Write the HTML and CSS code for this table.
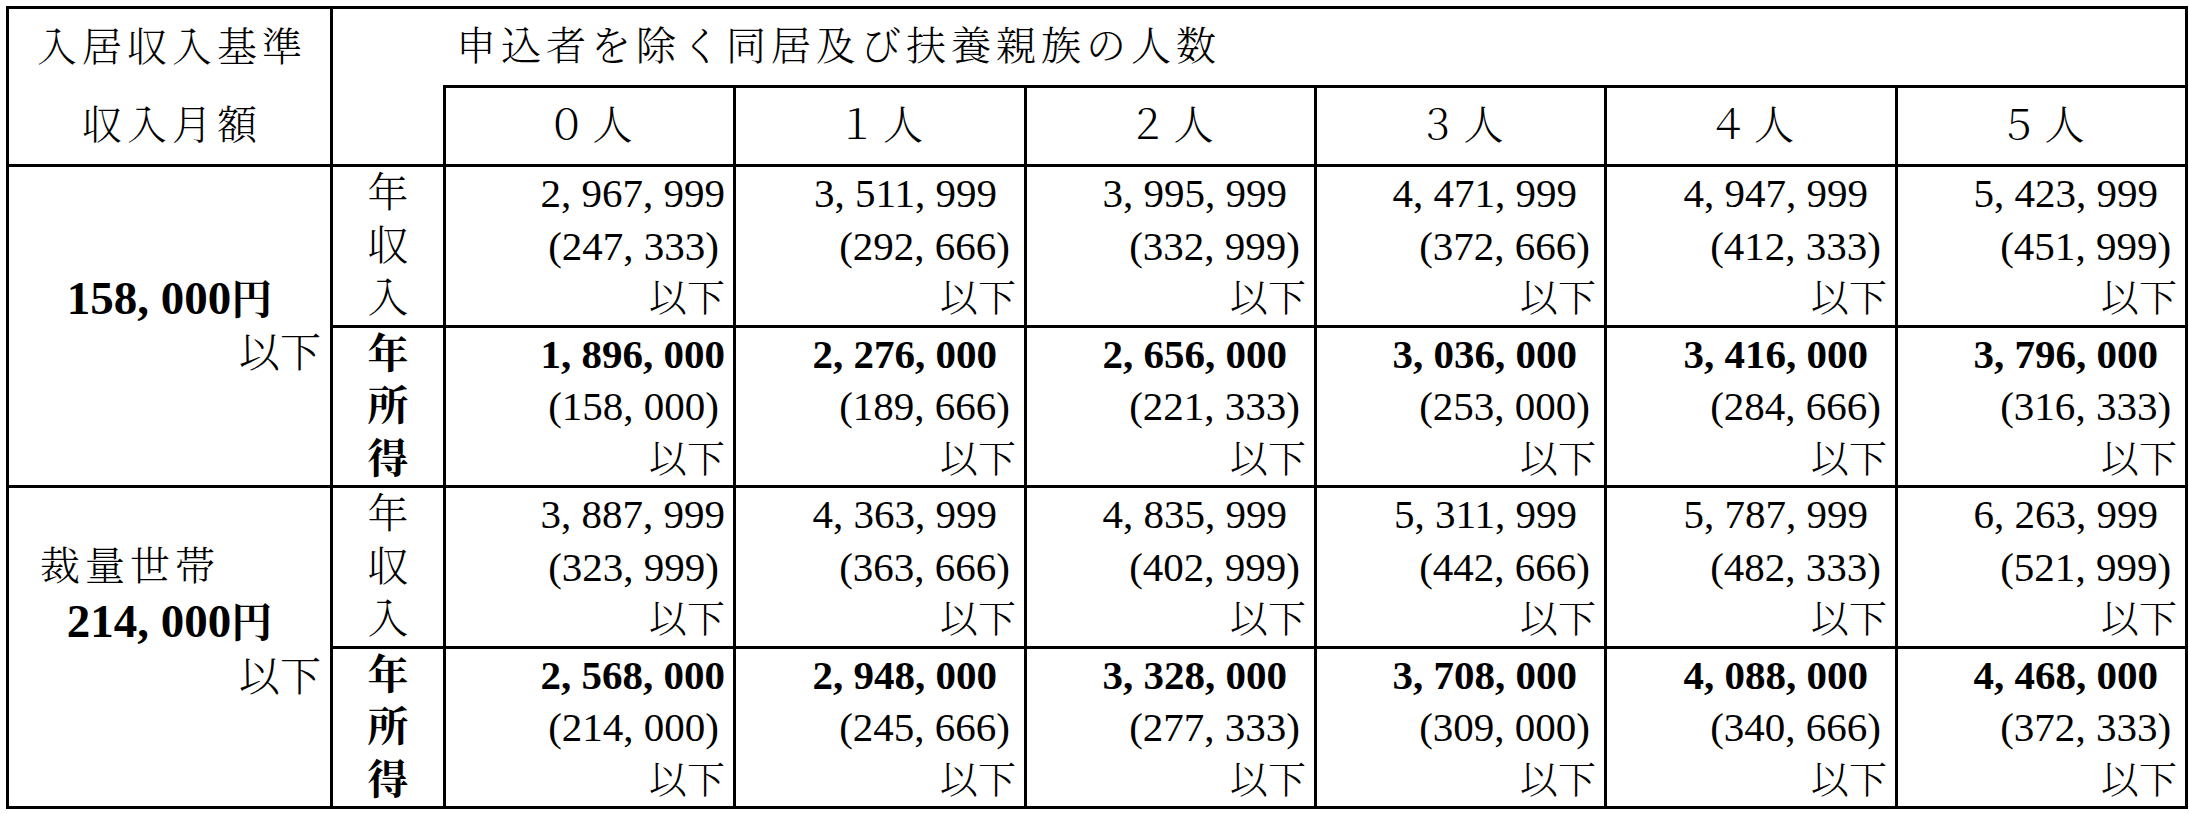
FILE: index.html
```html
<!DOCTYPE html>
<html lang="ja">
<head>
<meta charset="utf-8">
<title>入居収入基準</title>
<link rel="stylesheet" href="styles.css">
</head>
<body>
<table class="grid">
  <colgroup>
    <col class="w-label"><col class="w-kind">
    <col class="w-290"><col class="w-291"><col class="w-290"><col class="w-290"><col class="w-291"><col class="w-290">
  </colgroup>
  <tr>
    <td class="corner" rowspan="2">入居収入基準<br>収入月額</td>
    <td class="title" colspan="7">申込者を除く同居及び扶養親族の人数</td>
  </tr>
  <tr>
    <td class="gap"></td>
    <td class="cnt">０人</td>
    <td class="cnt">１人</td>
    <td class="cnt">２人</td>
    <td class="cnt">３人</td>
    <td class="cnt">４人</td>
    <td class="cnt">５人</td>
  </tr>

  <tr>
    <td class="limit one" rowspan="2">
      <div class="amt">158<span class="c">,</span>000<span class="yen">円</span></div>
      <div class="below">以下</div>
    </td>
    <td class="kind">年<br>収<br>入</td>
    <td class="v v0"><div class="n">2<span class="c">,</span>967<span class="c">,</span>999</div><div class="p">(247<span class="c">,</span>333)</div><div class="u">以下</div></td>
    <td class="v"><div class="n">3<span class="c">,</span>511<span class="c">,</span>999</div><div class="p">(292<span class="c">,</span>666)</div><div class="u">以下</div></td>
    <td class="v"><div class="n">3<span class="c">,</span>995<span class="c">,</span>999</div><div class="p">(332<span class="c">,</span>999)</div><div class="u">以下</div></td>
    <td class="v"><div class="n">4<span class="c">,</span>471<span class="c">,</span>999</div><div class="p">(372<span class="c">,</span>666)</div><div class="u">以下</div></td>
    <td class="v"><div class="n">4<span class="c">,</span>947<span class="c">,</span>999</div><div class="p">(412<span class="c">,</span>333)</div><div class="u">以下</div></td>
    <td class="v"><div class="n">5<span class="c">,</span>423<span class="c">,</span>999</div><div class="p">(451<span class="c">,</span>999)</div><div class="u">以下</div></td>
  </tr>
  <tr class="inc">
    <td class="kind">年<br>所<br>得</td>
    <td class="v v0"><div class="n">1<span class="c">,</span>896<span class="c">,</span>000</div><div class="p">(158<span class="c">,</span>000)</div><div class="u">以下</div></td>
    <td class="v"><div class="n">2<span class="c">,</span>276<span class="c">,</span>000</div><div class="p">(189<span class="c">,</span>666)</div><div class="u">以下</div></td>
    <td class="v"><div class="n">2<span class="c">,</span>656<span class="c">,</span>000</div><div class="p">(221<span class="c">,</span>333)</div><div class="u">以下</div></td>
    <td class="v"><div class="n">3<span class="c">,</span>036<span class="c">,</span>000</div><div class="p">(253<span class="c">,</span>000)</div><div class="u">以下</div></td>
    <td class="v"><div class="n">3<span class="c">,</span>416<span class="c">,</span>000</div><div class="p">(284<span class="c">,</span>666)</div><div class="u">以下</div></td>
    <td class="v"><div class="n">3<span class="c">,</span>796<span class="c">,</span>000</div><div class="p">(316<span class="c">,</span>333)</div><div class="u">以下</div></td>
  </tr>

  <tr>
    <td class="limit two" rowspan="2">
      <div class="name">裁量世帯</div>
      <div class="amt">214<span class="c">,</span>000<span class="yen">円</span></div>
      <div class="below">以下</div>
    </td>
    <td class="kind">年<br>収<br>入</td>
    <td class="v v0"><div class="n">3<span class="c">,</span>887<span class="c">,</span>999</div><div class="p">(323<span class="c">,</span>999)</div><div class="u">以下</div></td>
    <td class="v"><div class="n">4<span class="c">,</span>363<span class="c">,</span>999</div><div class="p">(363<span class="c">,</span>666)</div><div class="u">以下</div></td>
    <td class="v"><div class="n">4<span class="c">,</span>835<span class="c">,</span>999</div><div class="p">(402<span class="c">,</span>999)</div><div class="u">以下</div></td>
    <td class="v"><div class="n">5<span class="c">,</span>311<span class="c">,</span>999</div><div class="p">(442<span class="c">,</span>666)</div><div class="u">以下</div></td>
    <td class="v"><div class="n">5<span class="c">,</span>787<span class="c">,</span>999</div><div class="p">(482<span class="c">,</span>333)</div><div class="u">以下</div></td>
    <td class="v"><div class="n">6<span class="c">,</span>263<span class="c">,</span>999</div><div class="p">(521<span class="c">,</span>999)</div><div class="u">以下</div></td>
  </tr>
  <tr class="inc">
    <td class="kind">年<br>所<br>得</td>
    <td class="v v0"><div class="n">2<span class="c">,</span>568<span class="c">,</span>000</div><div class="p">(214<span class="c">,</span>000)</div><div class="u">以下</div></td>
    <td class="v"><div class="n">2<span class="c">,</span>948<span class="c">,</span>000</div><div class="p">(245<span class="c">,</span>666)</div><div class="u">以下</div></td>
    <td class="v"><div class="n">3<span class="c">,</span>328<span class="c">,</span>000</div><div class="p">(277<span class="c">,</span>333)</div><div class="u">以下</div></td>
    <td class="v"><div class="n">3<span class="c">,</span>708<span class="c">,</span>000</div><div class="p">(309<span class="c">,</span>000)</div><div class="u">以下</div></td>
    <td class="v"><div class="n">4<span class="c">,</span>088<span class="c">,</span>000</div><div class="p">(340<span class="c">,</span>666)</div><div class="u">以下</div></td>
    <td class="v"><div class="n">4<span class="c">,</span>468<span class="c">,</span>000</div><div class="p">(372<span class="c">,</span>333)</div><div class="u">以下</div></td>
  </tr>
</table>
</body>
</html>
```

FILE: styles.css
```css
html, body {
  margin: 0;
  background: #fff;
}
body {
  padding: 6px 0 0 6px;
  font-family: "Liberation Serif", "Noto Serif CJK JP", "Noto Sans CJK JP", serif;
  color: #000;
}
.grid {
  border-collapse: collapse;
  table-layout: fixed;
  width: 2182px;
}
.grid td {
  border: 3px solid #000;
  padding: 0;
  vertical-align: middle;
}
.w-label { width: 324px; }
.w-kind { width: 113px; }
.w-290 { width: 290px; }
.w-291 { width: 291px; }

.corner {
  font-size: 40px;
  font-weight: 300;
  letter-spacing: 5px;
  line-height: 77.5px;
  text-align: center;
  padding-left: 5px !important;
}
.title {
  font-size: 40px;
  font-weight: 300;
  letter-spacing: 5px;
  line-height: 76px;
  padding-left: 123px !important;
  text-align: left;
}
.gap {
  border-top-style: hidden !important;
}
.cnt {
  font-size: 40px;
  font-weight: 300;
  letter-spacing: 6px;
  line-height: 76px;
  text-align: center;
  padding-left: 6px !important;
}

.c {
  display: inline-block;
  width: 0.5em;
  text-align: left;
}

.limit {
  line-height: 53px;
}
.limit.two {
  line-height: 54px;
  padding-bottom: 50px !important;
}
.limit .amt {
  font-size: 47px;
  font-weight: 700;
  text-align: center;
}
.limit .yen {
  font-size: 41px;
}
.limit .below {
  font-size: 41px;
  font-weight: 300;
  text-align: right;
  padding-right: 9px;
}
.limit .name {
  font-size: 40px;
  font-weight: 300;
  letter-spacing: 5px;
  padding-left: 31px;
}

.kind {
  font-size: 41px;
  font-weight: 300;
  line-height: 52.5px;
  text-align: center;
}
.inc .kind {
  font-weight: 700;
}

.v {
  font-size: 41px;
  line-height: 52.5px;
  text-align: right;
  padding-right: 8px !important;
  white-space: nowrap;
}
.v .n {
  padding-right: 19px;
}
.v0 .n {
  padding-right: 0;
}
.inc .v .n {
  font-weight: 700;
}
.v .p {
  padding-right: 6px;
}
.v .u {
  font-size: 38px;
  font-weight: 300;
}
```
